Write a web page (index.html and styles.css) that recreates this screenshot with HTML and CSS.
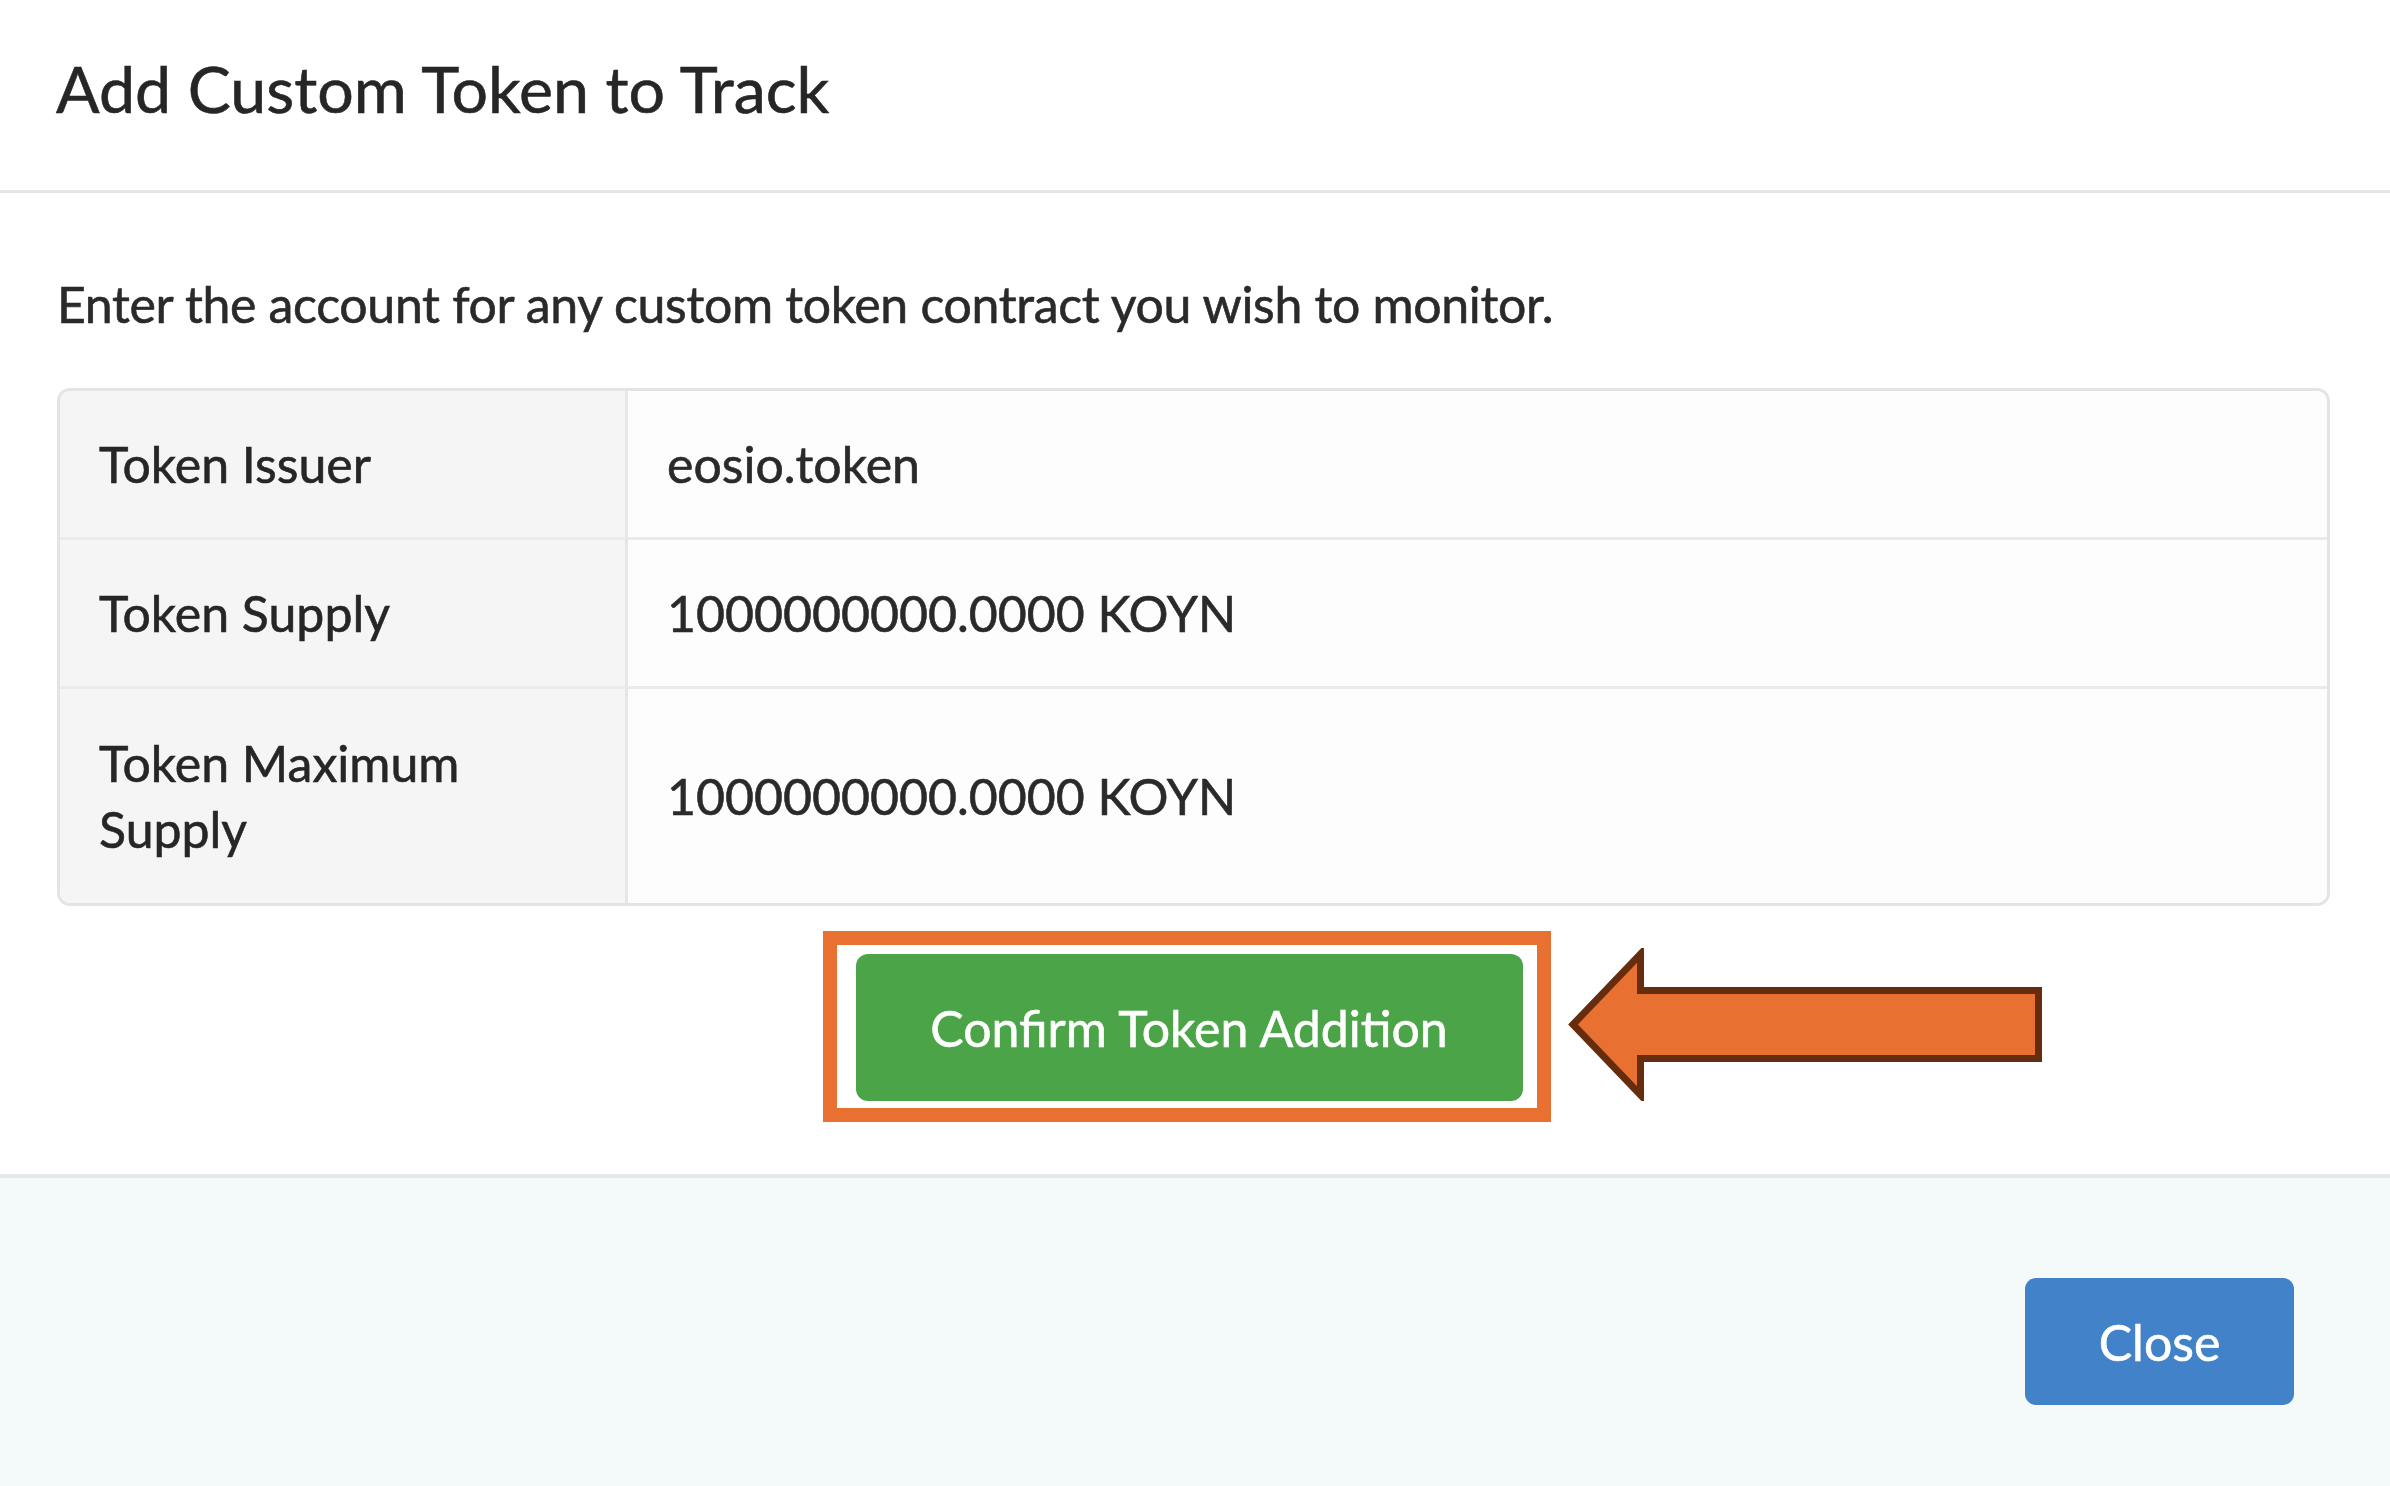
FILE: index.html
```html
<!DOCTYPE html>
<html lang="en">
<head>
<meta charset="utf-8">
<title>Add Custom Token to Track</title>
<link rel="stylesheet" href="styles.css">
</head>
<body>
<div class="modal">
  <div class="modal-header">
    <h4 class="modal-title">Add Custom Token to Track</h4>
  </div>
  <div class="modal-body">
    <p class="intro">Enter the account for any custom token contract you wish to monitor.</p>
    <table class="token-table">
      <tbody>
        <tr>
          <th>Token Issuer</th>
          <td>eosio.token</td>
        </tr>
        <tr>
          <th>Token Supply</th>
          <td>1000000000.0000 KOYN</td>
        </tr>
        <tr class="tall">
          <th>Token Maximum Supply</th>
          <td>1000000000.0000 KOYN</td>
        </tr>
      </tbody>
    </table>
    <div class="actions">
      <div class="highlight">
        <button class="btn btn-green" type="button">Confirm Token Addition</button>
        <svg class="arrow" width="475" height="153" viewBox="0 0 475 153" aria-hidden="true">
          <polygon points="6,76.5 73.5,6 73.5,42.5 471.5,42.5 471.5,110.5 73.5,110.5 73.5,147 6,76.5" fill="#e87132" stroke="#652c0e" stroke-width="7" stroke-linejoin="miter"/>
        </svg>
      </div>
    </div>
  </div>
  <div class="modal-footer">
    <button class="btn btn-blue" type="button">Close</button>
  </div>
</div>
</body>
</html>
```

FILE: styles.css
```css
* { box-sizing: border-box; }

html, body {
  margin: 0;
  padding: 0;
  background: #ffffff;
}

body {
  font-family: "Lato", "Open Sans", "Liberation Sans", sans-serif;
  color: #2a2a2a;
  width: 2390px;
  height: 1486px;
  overflow: hidden;
  -webkit-text-stroke: 0.6px currentColor;
}

.modal {
  display: flex;
  flex-direction: column;
  height: 1486px;
}

.modal-header {
  padding: 53px 57px 67px 56px;
  border-bottom: 3px solid #e6e6e6;
}

.modal-title {
  margin: 0;
  font-size: 64.5px;
  line-height: 70px;
  font-weight: 400;
  color: #262626;
}

.modal-body {
  padding: 78px 60px 52px 57px;
}

.intro {
  margin: 0 0 50px 0;
  font-size: 50px;
  line-height: 67px;
  letter-spacing: -0.33px;
  color: #2a2a2a;
}

.token-table {
  width: 100%;
  border-collapse: separate;
  border-spacing: 0;
  border: 3px solid #e4e4e4;
  border-radius: 13px;
  overflow: hidden;
  font-size: 50px;
  line-height: 66px;
}

.token-table th,
.token-table td {
  padding: 40px 40px 40px 39px;
  text-align: left;
  vertical-align: middle;
}

.token-table tr.tall th,
.token-table tr.tall td {
  padding-top: 41px;
  padding-bottom: 41px;
}

.token-table tr + tr th,
.token-table tr + tr td {
  border-top: 3px solid #ebebeb;
}

.token-table th {
  width: 568px;
  font-weight: 400;
  background: #f5f5f5;
  border-right: 3px solid #e6e6e6;
  color: #262626;
}

.token-table td {
  background: #fdfdfd;
  color: #2a2a2a;
}

.actions {
  display: flex;
  justify-content: center;
  padding-top: 25px;
  padding-right: 14px;
}

.highlight {
  position: relative;
  border: 14px solid #e87132;
  padding: 9px 14px 7px 19px;
  background: #ffffff;
}

.btn {
  font-family: "Lato", "Open Sans", "Liberation Sans", sans-serif;
  font-size: 50px;
  font-weight: 400;
  color: #ffffff;
  border: none;
  cursor: pointer;
  display: flex;
  align-items: center;
  justify-content: center;
  -webkit-text-stroke: 0.6px #ffffff;
}

.btn-green {
  width: 667px;
  height: 147px;
  background: #4ba548;
  border-radius: 12px;
}

.arrow {
  position: absolute;
  left: calc(100% + 30px);
  top: 3px;
  display: block;
}

.modal-footer {
  flex: 1;
  background: #f4f9f9;
  border-top: 4px solid #e8e8ea;
  display: flex;
  justify-content: flex-end;
  align-items: flex-start;
  padding: 100px 96px 0 0;
}

.btn-blue {
  width: 269px;
  height: 127px;
  background: #4182c8;
  border-radius: 11px;
}
```
